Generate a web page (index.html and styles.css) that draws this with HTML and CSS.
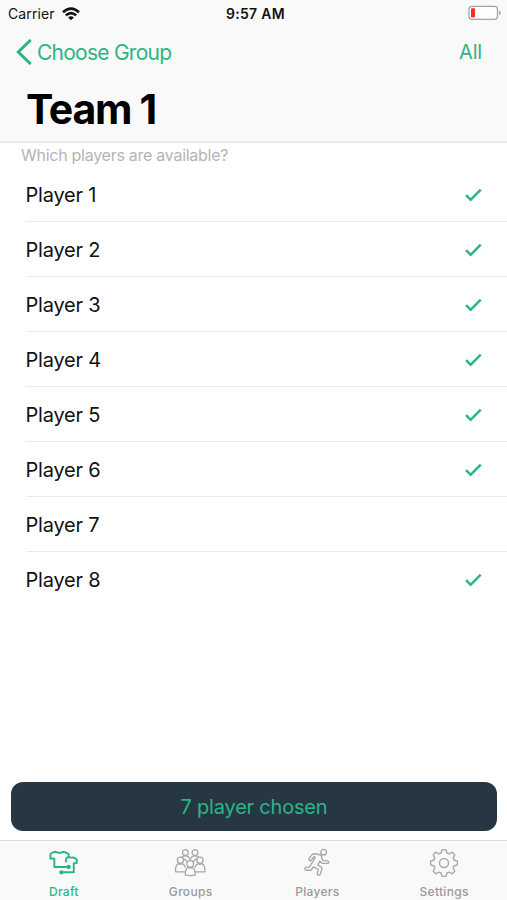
FILE: index.html
```html
<!DOCTYPE html>
<html lang="en">
<head>
<meta charset="utf-8">
<title>Team 1</title>
<link rel="stylesheet" href="styles.css">
</head>
<body>
<header class="header">
  <div class="status">
    <div class="carrier"><span>Carrier</span>
      <svg class="wifi" width="18" height="14" viewBox="0 0 18 14" fill="none" stroke="#111" stroke-width="2.5"><path d="M1 5.2Q9-2 17 5.2M3.8 8.4Q9 3.9 14.2 8.4"/><path d="M6.1 10.5Q9 8.1 11.9 10.5L9 13.2Z" fill="#111" stroke="none"/></svg>
    </div>
    <div class="time">9:57 AM</div>
    <svg class="battery" width="33" height="16" viewBox="0 0 33 16"><rect x="1" y="1.3" width="28.5" height="13" rx="3" fill="#fdfdfd" stroke="#a5a5a5" stroke-width="1.3"/><rect x="3" y="3.3" width="4" height="9.2" rx="1" fill="#fb2c26"/><path d="M31 5.6q1.8.5 1.8 2.2T31 10z" fill="#a5a5a5"/></svg>
  </div>
  <nav class="nav">
    <a class="back"><svg width="16" height="26" viewBox="0 0 16 26" fill="none" stroke="#2bb586" stroke-width="3"><path d="M14.7 1 2.3 13l12.4 12"/></svg><span>Choose Group</span></a>
    <a class="all">All</a>
  </nav>
  <h1 class="title">Team 1</h1>
</header>
<main class="content">
  <p class="prompt">Which players are available?</p>
  <ul class="players">
    <li><span>Player 1</span><svg class="check" viewBox="0 0 16 13"><path d="M1 6.7 5.3 11 14.8 1.5"/></svg></li>
    <li><span>Player 2</span><svg class="check" viewBox="0 0 16 13"><path d="M1 6.7 5.3 11 14.8 1.5"/></svg></li>
    <li><span>Player 3</span><svg class="check" viewBox="0 0 16 13"><path d="M1 6.7 5.3 11 14.8 1.5"/></svg></li>
    <li><span>Player 4</span><svg class="check" viewBox="0 0 16 13"><path d="M1 6.7 5.3 11 14.8 1.5"/></svg></li>
    <li><span>Player 5</span><svg class="check" viewBox="0 0 16 13"><path d="M1 6.7 5.3 11 14.8 1.5"/></svg></li>
    <li><span>Player 6</span><svg class="check" viewBox="0 0 16 13"><path d="M1 6.7 5.3 11 14.8 1.5"/></svg></li>
    <li><span>Player 7</span></li>
    <li><span>Player 8</span><svg class="check" viewBox="0 0 16 13"><path d="M1 6.7 5.3 11 14.8 1.5"/></svg></li>
  </ul>
</main>
<button class="chosen">7 player chosen</button>
<footer class="tabs">
  <a class="tab active">
    <svg width="30" height="30" viewBox="0 0 30 30" stroke-width="1.9"><path d="M20.5 19H6.3V10.4L2.5 10.7V6.3Q2.8 4.8 7.4 3.8 8.2 3.8 9 4.3 11.5 5.2 14 4.3 14.8 3.8 15.6 3.8 19.8 4.8 20.6 6.3V9M20.6 9Q18.3 9.3 18 11.2V13.5M20.6 9Q23 9.9 25 9.5 28.6 10.5 28.8 12V15L25.8 15.3V24.3H14"/><circle cx="20.6" cy="19" r="1.2" fill="currentColor"/><circle cx="13.4" cy="24.3" r="1.2" fill="currentColor"/></svg>
    <span>Draft</span>
  </a>
  <a class="tab">
    <svg width="32" height="30" viewBox="0 0 32 30" stroke-width="1.3"><circle cx="11.4" cy="4.6" r="2.9"/><circle cx="21" cy="4.6" r="2.9"/><path d="M7.8 9.1Q9 7.9 11.4 7.9 14.8 7.9 16.2 11.4 17.6 7.9 21 7.9 23.4 7.9 24.6 9.1"/><circle cx="6.4" cy="12.2" r="3.1"/><circle cx="26" cy="12.2" r="3.1"/><path d="M10.8 23.8H1.6Q1 17.2 4.6 15.6L6.4 16.4 8.2 15.6Q10.4 16.4 11.4 19.2M21.6 23.8H30.8Q31.4 17.2 27.8 15.6L26 16.4 24.2 15.6Q22 16.4 21 19.2M9.5 10.5 13.2 13.6M22.9 10.5 19.2 13.6"/><circle cx="16.2" cy="15.9" r="3.3"/><path d="M14.4 19.3Q11.2 20.2 11.2 26.9 16.2 28.5 21.2 26.9 21.2 20.2 18 19.3L16.2 20.2Z"/></svg>
    <span>Groups</span>
  </a>
  <a class="tab">
    <svg width="28" height="30" viewBox="0 -.6 28 30" stroke-width="1.4"><circle cx="20.6" cy="3.6" r="2.8"/><path d="M6 10.3 9 6.1Q10 5.1 12 5.2L17 6.1Q19 6.7 18.6 9L20 12 24.5 12.3Q26.8 13.2 25 14.8L19.2 14.6 16.8 12.5 14.8 16.2 18.3 18.5Q19.2 19.4 18.8 20.8L17.3 25.7Q15.2 27.8 14.2 25.3L15.3 20.8 10.5 18.2 7.8 21.7H2.9Q.9 20.2 2.7 18.8L6.2 18.6 10.2 12.5 12.2 8.6 10.8 8.4 8 12Q6 12.5 6 10.3Z"/></svg>
    <span>Players</span>
  </a>
  <a class="tab">
    <svg width="30" height="30" viewBox="-15 -15 30 30" stroke-width="1.4"><path d="M-3-10-1.8-13.4H1.8L3-10 4.95-9.19 8.2-10.8 10.8-8.2 9.19-4.95 10-3 13.4-1.8V1.8L10 3 9.19 4.95 10.8 8.2 8.2 10.8 4.95 9.19 3 10 1.8 13.4H-1.8L-3 10-4.95 9.19-8.2 10.8-10.8 8.2-9.19 4.95-10 3-13.4 1.8V-1.8L-10-3-9.19-4.95-10.8-8.2-8.2-10.8-4.95-9.19Z"/><circle r="4.5"/></svg>
    <span>Settings</span>
  </a>
</footer>
</body>
</html>
```

FILE: styles.css
```css
* { box-sizing: border-box; }
body {
  margin: 0;
  height: 900px;
  display: flex;
  flex-direction: column;
  background: #fff;
  color: #111;
  font-family: Inter, "Liberation Sans", sans-serif;
  white-space: nowrap;
  overflow: hidden;
}
.header {
  height: 143px;
  background: #f9f9f9;
  border-bottom: 2px solid #ebebeb;
}
.status {
  height: 27px;
  display: grid;
  grid-template-columns: 1fr auto 1fr;
  align-items: center;
  padding: 0 6px 0 8px;
  font-size: 14px;
}
.carrier { display: flex; align-items: center; gap: 7px; letter-spacing: 0.1px; }
.time { font-weight: 600; letter-spacing: 0.3px; padding-left: 2px; }
.battery { justify-self: end; margin-bottom: 1px; }
.nav {
  height: 50px;
  display: flex;
  justify-content: space-between;
  align-items: center;
  padding: 0 25px 0 16px;
  color: #2bb586;
  font-size: 21px;
  letter-spacing: -0.75px;
}
.back { display: flex; align-items: center; gap: 5px; }
.all { font-size: 20px; letter-spacing: -0.2px; }
.title {
  margin: 0;
  padding-left: 26px;
  font-size: 41px;
  line-height: 64px;
  font-weight: 700;
  letter-spacing: -1.3px;
  color: #000;
}
.content { flex: 1; }
.prompt {
  margin: 0;
  padding-left: 21px;
  height: 24px;
  line-height: 24px;
  font-size: 16px;
  letter-spacing: -0.27px;
  color: #b4b4b4;
}
.players { list-style: none; margin: 0; padding: 0 0 0 26px; }
.players li {
  height: 55px;
  display: flex;
  align-items: center;
  justify-content: space-between;
  padding-right: 25px;
  border-bottom: 1px solid #e9e9e9;
  font-size: 20px;
  letter-spacing: -0.22px;
}
.players li:last-child { border-bottom-color: transparent; }
.players span { padding-top: 1px; margin-left: -0.5px; }
.check { width: 17px; height: 14px; margin-top: 1px; fill: none; stroke: #2bb586; stroke-width: 2.4; }
.chosen {
  height: 49px;
  margin: 0 10px 9px 11px;
  border: 0;
  border-radius: 12px;
  background: #263743;
  color: #2bb586;
  font: 20px Inter, "Liberation Sans", sans-serif;
  letter-spacing: -0.2px;
}
.tabs {
  height: 60px;
  display: grid;
  grid-template-columns: repeat(4, 1fr);
  background: #f9f9f9;
  border-top: 1px solid #dcdcdc;
}
.tab {
  display: flex;
  flex-direction: column;
  align-items: center;
  padding-top: 7px;
  color: #999;
  font-size: 12px;
  font-weight: 500;
  letter-spacing: 0.3px;
}
.tab svg { flex: none; fill: none; stroke: #a8a8a8; stroke-linejoin: round; stroke-linecap: round; }
.tab span { line-height: 15px; margin-top: 6px; padding-left: 1px; }
.tab.active { color: #2bb586; }
.tab.active svg { stroke: #2bb586; }
```
